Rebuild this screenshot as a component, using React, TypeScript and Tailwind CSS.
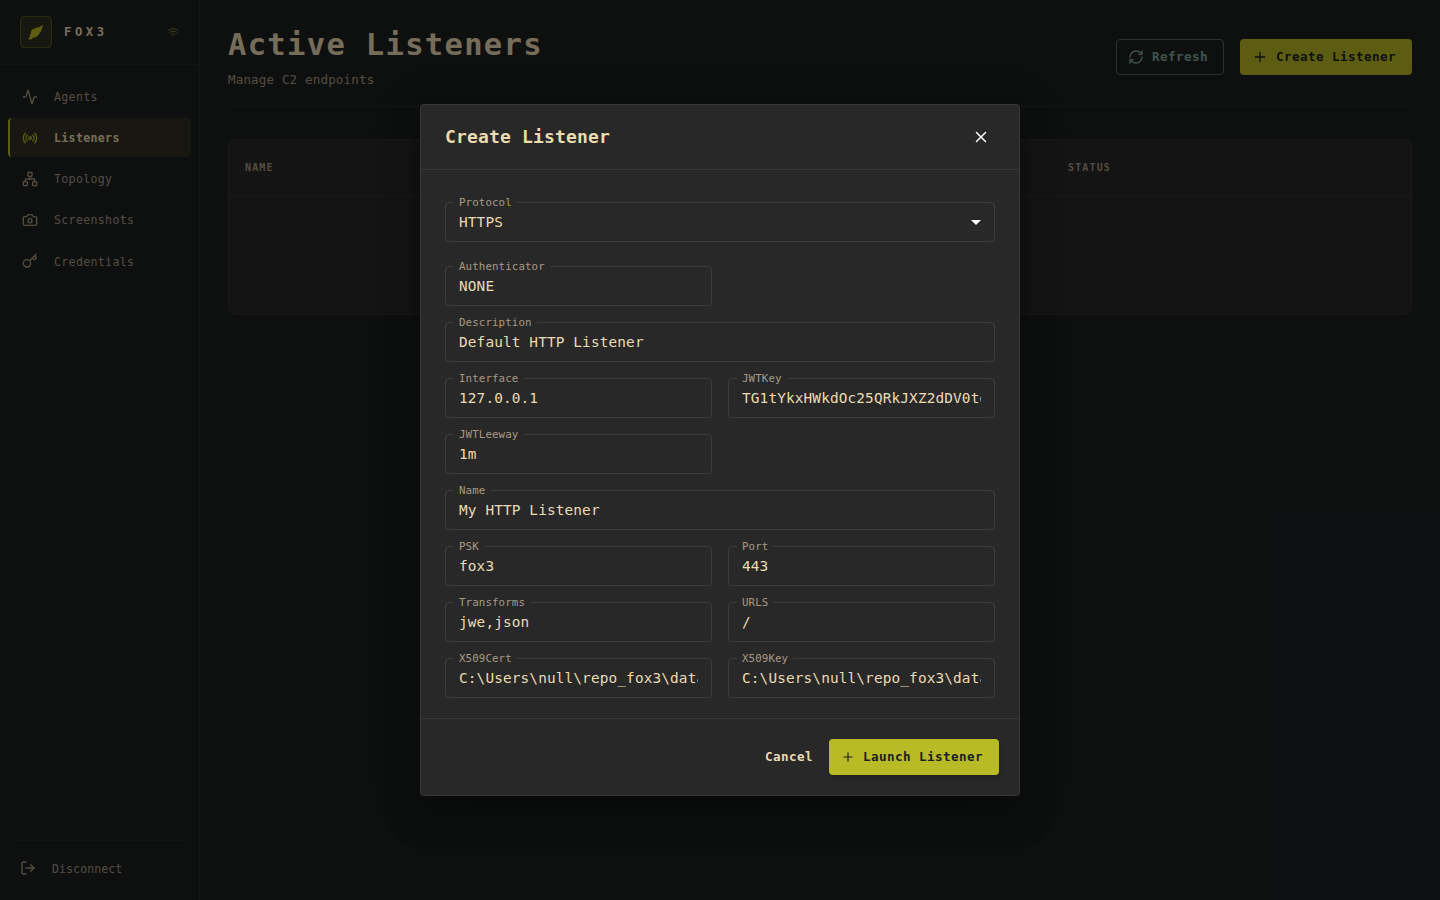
import React from "react";
import {
  Activity,
  Camera,
  Key,
  LogOut,
  Network,
  Plus,
  Radio,
  RefreshCw,
  Wifi,
  X,
} from "lucide-react";

const NAV = [
  { label: "Agents", icon: Activity },
  { label: "Listeners", icon: Radio, active: true },
  { label: "Topology", icon: Network },
  { label: "Screenshots", icon: Camera },
  { label: "Credentials", icon: Key },
];

// wide = full row, solo = leaves the second column empty
const FIELDS = [
  { label: "Authenticator", value: "NONE", solo: true },
  { label: "Description", value: "Default HTTP Listener", wide: true },
  { label: "Interface", value: "127.0.0.1" },
  { label: "JWTKey", value: "TG1tYkxHWkdOc25QRkJXZ2dDV0tdQ" },
  { label: "JWTLeeway", value: "1m", solo: true },
  { label: "Name", value: "My HTTP Listener", wide: true },
  { label: "PSK", value: "fox3" },
  { label: "Port", value: "443" },
  { label: "Transforms", value: "jwe,json" },
  { label: "URLS", value: "/" },
  { label: "X509Cert", value: "C:\\Users\\null\\repo_fox3\\data\\x509" },
  { label: "X509Key", value: "C:\\Users\\null\\repo_fox3\\data\\x509" },
];

function Field({ label, value, select }: { label: string; value: string; select?: boolean }) {
  return (
    <fieldset className="-mt-[6px] h-[46px] min-w-0 rounded-[4px] border border-[#3c3c38] pl-2">
      <legend className="h-3 px-[5px] text-[10.8px] leading-[14px] tracking-[0.1px] text-[#a89984]">
        {label}
      </legend>
      <div className="flex h-[27px] items-center justify-between pr-[13px] pl-[5px]">
        <span className="overflow-hidden text-[14.4px] leading-5 tracking-[0.13px] whitespace-nowrap text-[#ebdbb2]">
          {value}
        </span>
        {select && (
          <svg width="10" height="5" viewBox="0 0 10 5" className="mt-[2px] shrink-0 fill-white">
            <path d="M0 0h10L5 5z" />
          </svg>
        )}
      </div>
    </fieldset>
  );
}

function Sidebar() {
  return (
    <aside className="flex w-[200px] shrink-0 flex-col border-r border-[#282b2c]">
      <div className="flex h-[65px] items-center border-b border-[#282b2c] px-5">
        <div className="flex size-8 items-center justify-center rounded-[4px] border border-[#54561f] bg-[#2e3021]">
          <svg width="16" height="16" viewBox="0 0 16 16" className="fill-[#b8bb26]">
            <path d="M15.4.8 14 4.2 13 7.2 11.6 9 11.2 10.4 9.2 11.8 8.8 13 5.6 13.4 3.4 15.2.6 15.8.6 14.2 2.2 12.2 1.8 11 2.8 9.8 3 7 4.4 5.4 6.6 4.6 8.6 3.4 11.4 3z" />
          </svg>
        </div>
        <span className="ml-3 flex-1 text-[12.3px] font-bold tracking-[3.5px] text-[#ebdbb2]">
          FOX3
        </span>
        <Wifi size={12} className="text-[#b8bb26] opacity-60" />
      </div>

      <nav className="flex flex-1 flex-col gap-[2px] px-2 pt-3">
        {NAV.map(({ label, icon: Icon, active }) => (
          <div
            key={label}
            className={
              active
                ? "flex h-[39.2px] items-center gap-4 rounded-[4px] border-l-2 border-[#b8bb26] bg-[#302f22] pl-3 font-bold text-[#ebdbb2]"
                : "flex h-[39.2px] items-center gap-4 rounded-[4px] border-l-2 border-transparent pl-3 text-[#a89984]"
            }
          >
            <Icon size={16} className={active ? "text-[#b8bb26]" : ""} />
            <span className="pt-[2px] text-[11.6px] tracking-[0.32px]">{label}</span>
          </div>
        ))}
      </nav>

      <div className="mx-4 flex h-[60px] items-center gap-4 border-t border-[#282b2c] pb-1 pl-1 text-[#a89984]">
        <LogOut size={16} className="mb-[2px]" />
        <span className="pt-[2px] text-[11.6px] tracking-[0.06px]">Disconnect</span>
      </div>
    </aside>
  );
}

function ListenersPage() {
  return (
    <main className="flex-1 px-7">
      <header className="flex h-[107px] justify-between border-b border-[#282b2c]">
        <div>
          <h1 className="mt-6 text-[30.5px] leading-[42px] font-bold tracking-[1.32px] text-[#ebdbb2]">
            Active Listeners
          </h1>
          <p className="mt-[4px] text-[12.6px] leading-5 tracking-[0.12px] text-[#a89984]">
            Manage C2 endpoints
          </p>
        </div>
        <div className="mt-[39px] flex gap-4 text-[12.6px] font-bold tracking-[0.42px]">
          <button className="flex h-9 w-[108px] items-center gap-2 rounded-[4px] border border-[#506460] pl-[11px] text-[#83a598]">
            <RefreshCw size={16} />
            Refresh
          </button>
          <button className="flex h-9 w-[172px] items-center gap-2 rounded-[4px] bg-[#b8bb26] pl-3 text-[#1d2021] shadow-md">
            <Plus size={16} />
            Create Listener
          </button>
        </div>
      </header>

      <div className="mt-8 h-44 rounded-[8px] border border-[#323232] bg-[#282828]">
        <div className="flex h-[57px] items-center border-b border-[#323232] pb-[2px] pl-4 text-[10px] font-bold tracking-[1.15px] text-[#a89984]">
          <span className="w-[823px]">NAME</span>
          <span>STATUS</span>
        </div>
      </div>
    </main>
  );
}

function CreateListenerDialog() {
  return (
    <div
      role="dialog"
      className="flex h-[692px] w-[600px] flex-col rounded-[4px] border border-[#3c3836] bg-[#282828] shadow-[0_11px_15px_-7px_rgba(0,0,0,0.2),0_24px_38px_3px_rgba(0,0,0,0.14),0_9px_46px_8px_rgba(0,0,0,0.12)]"
    >
      <div className="flex h-[65px] items-center justify-between border-b border-[#3a3936] pr-[29px] pl-6">
        <h2 className="pb-[2px] text-[18px] font-bold tracking-[0.16px] text-[#ebdbb2]">
          Create Listener
        </h2>
        <X size={18} className="text-white" />
      </div>

      <div className="flex-1 px-6 pt-8">
        <Field label="Protocol" value="HTTPS" select />
        <div className="mt-6 grid grid-cols-2 gap-4">
          {FIELDS.map((f) => (
            <React.Fragment key={f.label}>
              <div className={f.wide ? "col-span-2 h-10" : "h-10 min-w-0"}>
                <Field label={f.label} value={f.value} />
              </div>
              {f.solo && <div />}
            </React.Fragment>
          ))}
        </div>
      </div>

      <div className="flex h-[77px] items-center justify-end gap-4 border-t border-[#3a3936] pr-5 text-[12.6px] font-bold tracking-[0.42px]">
        <button className="text-[#ebdbb2]">Cancel</button>
        <button className="flex h-9 w-[170px] items-center gap-2 rounded-[4px] bg-[#b8bb26] pl-3 text-[#1d2021] shadow-md">
          <Plus size={14} />
          Launch Listener
        </button>
      </div>
    </div>
  );
}

export default function App() {
  return (
    <div className="relative h-[900px] w-[1440px] overflow-hidden bg-[#1d2021] font-['DejaVu_Sans_Mono',monospace]">
      <div className="flex h-full">
        <Sidebar />
        <ListenersPage />
      </div>

      {/* modal backdrop */}
      <div className="absolute inset-0 flex items-center justify-center bg-black/50">
        <CreateListenerDialog />
      </div>
    </div>
  );
}
